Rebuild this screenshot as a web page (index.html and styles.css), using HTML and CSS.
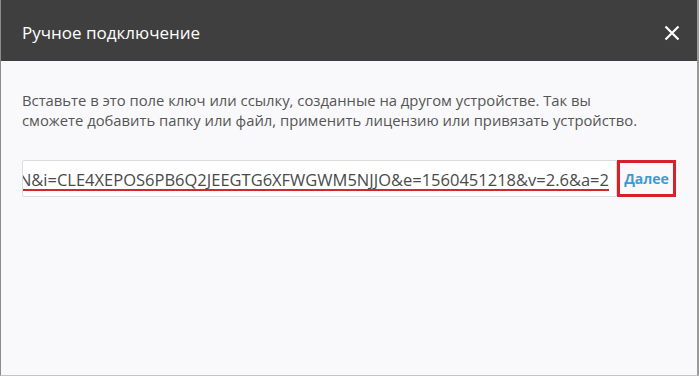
FILE: index.html
```html
<!DOCTYPE html>
<html lang="ru">
<head>
  <meta charset="UTF-8">
  <meta name="viewport" content="width=device-width, initial-scale=1.0">
  <title>Ручное подключение</title>
  <link rel="stylesheet" href="styles.css">
</head>
<body>
  <div class="dialog">
    <div class="dialog-header">
      <h1>Ручное подключение</h1>
      <button class="close" aria-label="Закрыть">
        <svg width="16" height="16" viewBox="0 0 16 16">
          <path d="M1.5 1.5 L14.5 14.5 M14.5 1.5 L1.5 14.5" stroke="#fff" stroke-width="2.2" fill="none"/>
        </svg>
      </button>
    </div>
    <div class="dialog-body">
      <p class="hint">Вставьте в это поле ключ или ссылку, созданные на другом устройстве. Так вы<br>сможете добавить папку или файл, применить лицензию или привязать устройство.</p>
      <div class="key-row">
        <div class="key-input">
          <span class="key-text">https://link.resilio.com/#f=Docs&amp;sz=0&amp;t=2&amp;s=WQ3KPN&amp;i=CLE4XEPOS6PB6Q2JEEGTG6XFWGWM5NJJO&amp;e=1560451218&amp;v=2.6&amp;a=2</span>
        </div>
        <a class="next" href="#">Далее</a>
      </div>
    </div>
  </div>
</body>
</html>
```

FILE: styles.css
```css
body {
  margin: 0;
  font-family: "Open Sans", "Noto Sans", sans-serif;
  background-color: #f9f9fb;
}
.dialog {
  height: 375px;
  border-left: 1px solid #8c8c8c;
  border-right: 2px solid #9a9a9a;
  border-bottom: 1px solid #c4c4c4;
  background-color: #f9f9fb;
}
.dialog-header {
  height: 61px;
  background-color: #3f3f3f;
  display: flex;
  align-items: center;
  justify-content: space-between;
  padding: 0 17px 0 21px;
}
.dialog-header h1 {
  margin: 0;
  font-size: 17px;
  font-weight: normal;
  color: #fff;
  margin-top: 4px;
}
.close {
  background: none;
  border: none;
  padding: 0;
  width: 16px;
  height: 16px;
  margin-top: 4px;
  cursor: pointer;
}
.dialog-body {
  padding: 29px 21px;
}
.hint {
  margin: 0;
  font-size: 14.8px;
  line-height: 20px;
  color: #555;
}
.key-row {
  display: flex;
  align-items: stretch;
  margin-top: 30px;
  height: 37px;
}
.key-input {
  flex: 1;
  display: flex;
  justify-content: flex-end;
  align-items: center;
  overflow: hidden;
  background-color: #fff;
  border: 1px solid #dcdcdc;
  border-radius: 2px;
  padding: 2px 7px 0 4px;
}
.key-text {
  white-space: nowrap;
  font-size: 16.5px;
  color: #4a4a4a;
  text-decoration: underline;
  text-decoration-color: #d6262d;
  text-decoration-thickness: 2px;
  text-decoration-skip-ink: none;
  text-underline-offset: 3px;
}
.next {
  width: 53px;
  border: 3px solid #d6202a;
  display: flex;
  align-items: center;
  justify-content: center;
  font-size: 14px;
  font-weight: bold;
  color: #3d9bd0;
  text-decoration: none;
}
```
